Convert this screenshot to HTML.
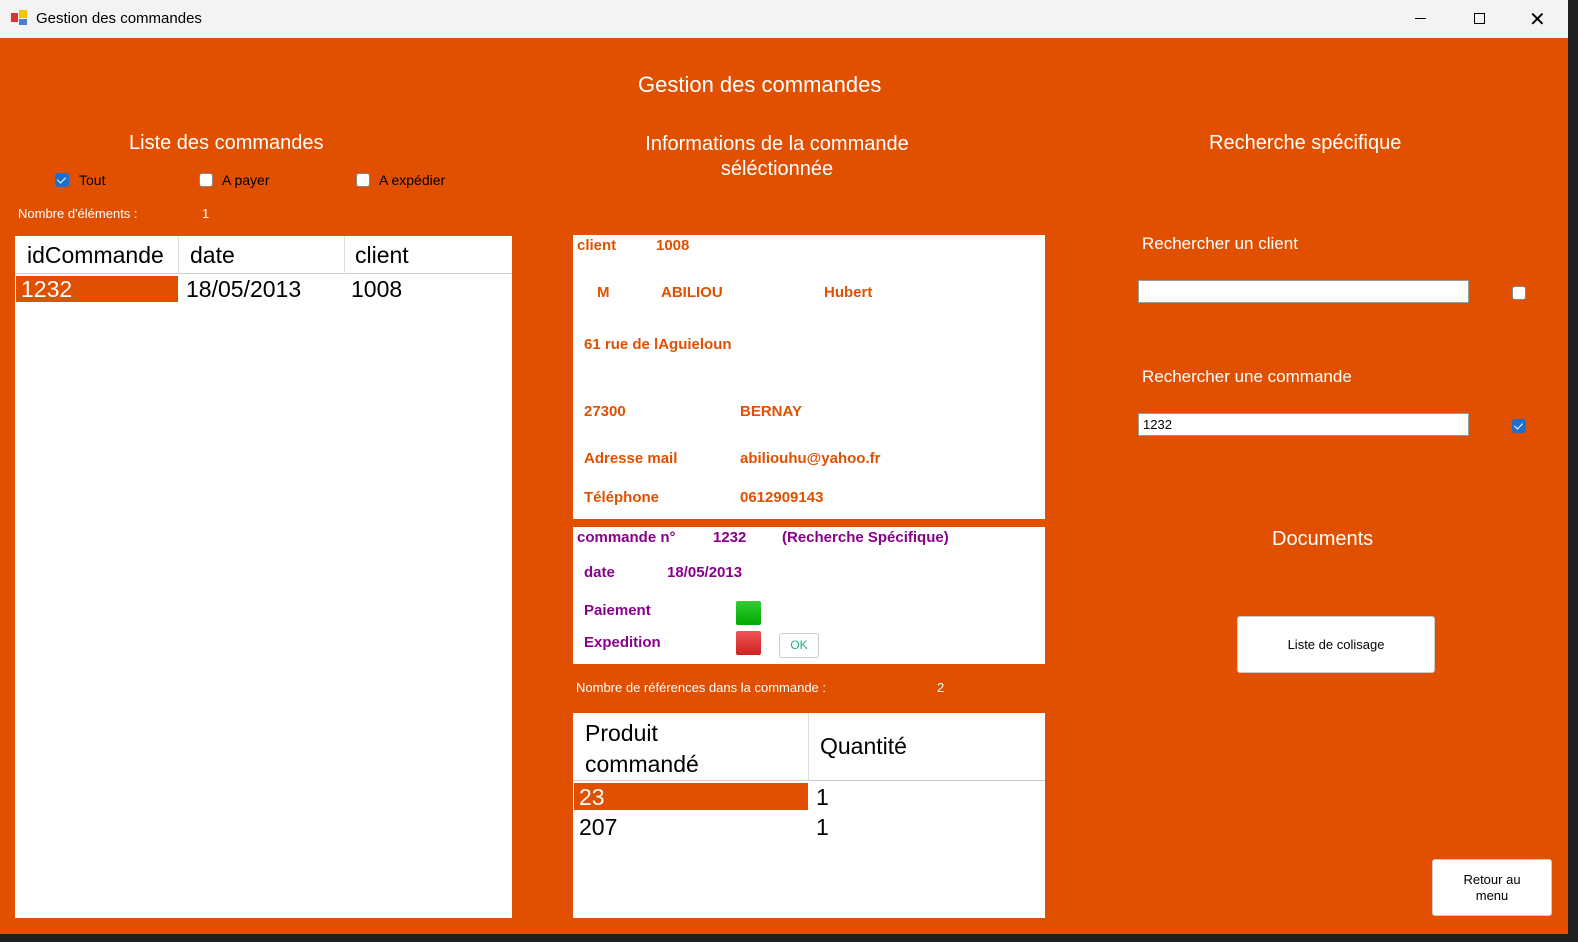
<!DOCTYPE html>
<html><head><meta charset="utf-8"><style>
*{margin:0;padding:0;box-sizing:border-box}
body{width:1578px;height:942px;background:#202020;font-family:"Liberation Sans",Arial,sans-serif;position:relative;overflow:hidden}
.title{position:absolute;left:0;top:0;width:1568px;height:38px;background:#f3f3f3;font-size:15px;color:#000}
.main{position:absolute;left:0;top:38px;width:1568px;height:896px;background:#e05000}
.a{position:absolute;white-space:nowrap}
.w{color:#fff}
.box{position:absolute;background:#fff}
.o{color:#e05000;font-weight:bold;font-size:15px}
.p{color:#8b008b;font-weight:bold;font-size:15px}
.cb{position:absolute;width:14px;height:14px;border:1px solid #888;border-radius:3px;background:#fff}
.cb.on{background:#1a6fd1;border-color:#1a6fd1}
.cb.on:after{content:"";position:absolute;left:3px;top:1px;width:4px;height:7px;border:solid #fff;border-width:0 1.5px 1.5px 0;transform:rotate(45deg)}
.btn{position:absolute;background:#fff;border:1px solid #ccc;border-radius:3px;font-size:13px;text-align:center;color:#000}
.inp{position:absolute;background:#fff;border:1px solid #999;height:23px;font-size:13px;padding:3px 4px}
</style></head><body>
<div class="title">
<div class="a" style="left:11px;top:10px;width:17px;height:15px"><div style="position:absolute;left:0;top:3px;width:7px;height:9px;background:#d33"></div><div style="position:absolute;left:8px;top:0;width:8px;height:8px;background:#f5c400"></div><div style="position:absolute;left:8px;top:9px;width:8px;height:6px;background:#4a7fd0"></div></div>
<div class="a" style="left:36px;top:10px">Gestion des commandes</div>
<div class="a" style="left:1415px;top:18px;width:11px;height:1px;background:#000"></div>
<div class="a" style="left:1474px;top:13px;width:11px;height:11px;border:1px solid #000"></div>
<div class="a" style="left:1529px;top:7px;font-size:20px">✕</div>
</div>
<div class="main">
<div class="a w" style="left:638px;top:34px;font-size:22px">Gestion des commandes</div>
<div class="a w" style="left:129px;top:94px;font-size:20px">Liste des commandes</div>
<div class="a w" style="left:617px;top:94px;font-size:20px;text-align:center;width:320px;line-height:25px">Informations de la commande<br>séléctionnée</div>
<div class="a w" style="left:1209px;top:94px;font-size:20px">Recherche spécifique</div>
<div class="cb on" style="left:55px;top:135px"></div><div class="a" style="left:79px;top:134px;font-size:14px;color:#000">Tout</div>
<div class="cb" style="left:199px;top:135px"></div><div class="a" style="left:222px;top:134px;font-size:14px;color:#000">A payer</div>
<div class="cb" style="left:356px;top:135px"></div><div class="a" style="left:379px;top:134px;font-size:14px;color:#000">A expédier</div>
<div class="a w" style="left:18px;top:168px;font-size:13px">Nombre d'éléments :</div>
<div class="a w" style="left:202px;top:168px;font-size:13px">1</div>
<div class="box" style="left:15px;top:198px;width:497px;height:682px">
<div class="a" style="left:0;top:0;width:497px;height:38px;border-bottom:1px solid #ccc"></div>
<div class="a" style="left:163px;top:0;width:1px;height:38px;background:#ddd"></div>
<div class="a" style="left:329px;top:0;width:1px;height:38px;background:#ddd"></div>
<div class="a" style="left:12px;top:6px;font-size:23px">idCommande</div>
<div class="a" style="left:175px;top:6px;font-size:23px">date</div>
<div class="a" style="left:340px;top:6px;font-size:23px">client</div>
<div class="a" style="left:1px;top:40px;width:162px;height:26px;background:#e05000"></div>
<div class="a w" style="left:6px;top:40px;font-size:23px">1232</div>
<div class="a" style="left:171px;top:40px;font-size:23px">18/05/2013</div>
<div class="a" style="left:336px;top:40px;font-size:23px">1008</div>
</div>
<div class="box" style="left:573px;top:197px;width:472px;height:284px">
<div class="a o" style="left:4px;top:2px">client</div><div class="a o" style="left:83px;top:2px">1008</div>
<div class="a o" style="left:24px;top:49px">M</div><div class="a o" style="left:88px;top:49px">ABILIOU</div><div class="a o" style="left:251px;top:49px">Hubert</div>
<div class="a o" style="left:11px;top:101px">61 rue de lAguieloun</div>
<div class="a o" style="left:11px;top:168px">27300</div><div class="a o" style="left:167px;top:168px">BERNAY</div>
<div class="a o" style="left:11px;top:215px">Adresse mail</div><div class="a o" style="left:167px;top:215px">abiliouhu@yahoo.fr</div>
<div class="a o" style="left:11px;top:254px">Téléphone</div><div class="a o" style="left:167px;top:254px">0612909143</div>
</div>
<div class="box" style="left:573px;top:489px;width:472px;height:137px">
<div class="a p" style="left:4px;top:2px">commande n°</div><div class="a p" style="left:140px;top:2px">1232</div><div class="a p" style="left:209px;top:2px">(Recherche Spécifique)</div>
<div class="a p" style="left:11px;top:37px">date</div><div class="a p" style="left:94px;top:37px">18/05/2013</div>
<div class="a p" style="left:11px;top:75px">Paiement</div><div class="a" style="left:163px;top:74px;width:25px;height:24px;background:linear-gradient(#3c3,#0a0);border-radius:2px"></div>
<div class="a p" style="left:11px;top:107px">Expedition</div><div class="a" style="left:163px;top:104px;width:25px;height:24px;background:linear-gradient(#e55,#c22);border-radius:2px"></div>
<div class="btn" style="left:206px;top:106px;width:40px;height:25px;line-height:23px;font-size:12px;color:#2a8">OK</div>
</div>
<div class="a w" style="left:576px;top:642px;font-size:13px">Nombre de références dans la commande :</div>
<div class="a w" style="left:937px;top:642px;font-size:13px">2</div>
<div class="box" style="left:573px;top:675px;width:472px;height:205px">
<div class="a" style="left:0;top:0;width:472px;height:68px;border-bottom:1px solid #ccc"></div>
<div class="a" style="left:235px;top:0;width:1px;height:68px;background:#ddd"></div>
<div class="a" style="left:12px;top:5px;font-size:23px;line-height:31px">Produit<br>commandé</div>
<div class="a" style="left:247px;top:20px;font-size:23px">Quantité</div>
<div class="a" style="left:1px;top:70px;width:234px;height:27px;background:#e05000"></div>
<div class="a w" style="left:6px;top:71px;font-size:23px">23</div>
<div class="a" style="left:243px;top:71px;font-size:23px">1</div>
<div class="a" style="left:6px;top:101px;font-size:23px">207</div>
<div class="a" style="left:243px;top:101px;font-size:23px">1</div>
</div>
<div class="a w" style="left:1142px;top:196px;font-size:17px">Rechercher un client</div>
<div class="inp" style="left:1138px;top:242px;width:331px"></div>
<div class="cb" style="left:1512px;top:248px"></div>
<div class="a w" style="left:1142px;top:329px;font-size:17px">Rechercher une commande</div>
<div class="inp" style="left:1138px;top:375px;width:331px">1232</div>
<div class="cb on" style="left:1512px;top:381px"></div>
<div class="a w" style="left:1272px;top:490px;font-size:20px">Documents</div>
<div class="btn" style="left:1237px;top:578px;width:198px;height:57px;line-height:55px">Liste de colisage</div>
<div class="btn" style="left:1432px;top:821px;width:120px;height:57px;padding-top:12px;line-height:16px">Retour au<br>menu</div>
</div>
</body></html>
